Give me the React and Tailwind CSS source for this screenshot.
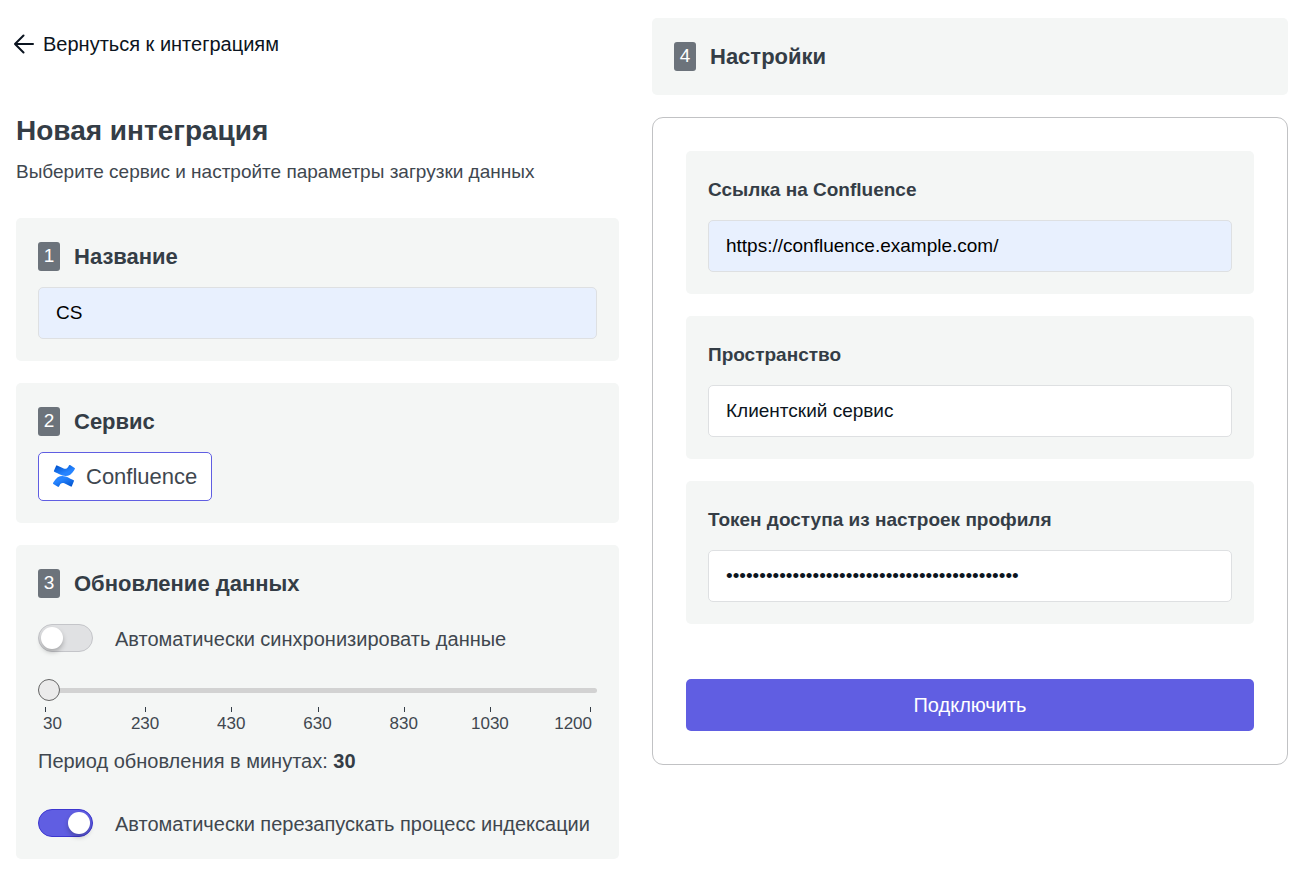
import { useState } from "react";

const periods = [30, 230, 430, 630, 830, 1030, 1200];

function Card({ children, className = "" }) {
  return <section className={`rounded-[5px] bg-[#f4f6f5] p-[22px] ${className}`}>{children}</section>;
}

function StepHeading({ step, children }) {
  return (
    <h2 className="flex h-[33px] items-center gap-[14px] text-[22px] leading-[32px] font-bold text-[#343d46]">
      <span className="flex h-[29px] w-[22px] justify-center rounded-[3px] bg-[#6c737b] text-[19px] leading-[27px] font-normal text-white">
        {step}
      </span>
      {children}
    </h2>
  );
}

function TextInput({ filled = false, ...props }) {
  return (
    <input
      {...props}
      className={`block h-[52px] w-full rounded-[5px] border border-[#dee0e2] px-[17px] text-[19px] ${
        filled ? "bg-[#e8f0fe] text-black" : "bg-white text-[#0b1420]"
      }`}
    />
  );
}

function SettingField({ id, label, ...props }) {
  return (
    <Card>
      <label htmlFor={id} className="mb-[14px] block text-[19px] leading-[33px] font-bold text-[#343d46]">
        {label}
      </label>
      <TextInput id={id} {...props} />
    </Card>
  );
}

function Switch({ label, checked, onChange }) {
  return (
    <label className="flex h-7 items-center gap-[22px] text-[20px] text-[#40474f]">
      <input
        type="checkbox"
        role="switch"
        checked={checked}
        onChange={(e) => onChange(e.target.checked)}
        className="h-7 w-[55px] shrink-0 appearance-none rounded-full border border-[#c4c5c9] bg-[#e0e1e3] px-[2px] py-[2px] before:block before:size-[22px] before:rounded-full before:bg-white before:shadow-[0_3px_5px_rgba(0,0,0,0.25)] checked:border-[#3d37cf] checked:bg-[#605ee2] checked:before:ml-[27px]"
      />
      <span className="pt-[2px]">{label}</span>
    </label>
  );
}

function ConfluenceLogo() {
  return (
    <svg viewBox="0 0 256 246" preserveAspectRatio="none" className="size-[22px]" aria-hidden="true">
      <defs>
        <linearGradient id="lower" x1="99%" y1="113%" x2="34%" y2="38%">
          <stop offset="18%" stopColor="#0052cc" />
          <stop offset="100%" stopColor="#2684ff" />
        </linearGradient>
        <linearGradient id="upper" x1="1%" y1="-13%" x2="66%" y2="62%">
          <stop offset="18%" stopColor="#0052cc" />
          <stop offset="100%" stopColor="#2684ff" />
        </linearGradient>
      </defs>
      <path
        fill="url(#lower)"
        d="M9.26 187.33c-2.64 4.3-5.61 9.3-8.13 13.29a8.13 8.13 0 0 0 2.72 11.05l52.83 32.51a8.13 8.13 0 0 0 11.25-2.77c2.12-3.53 4.84-8.12 7.81-13.04 20.93-34.54 41.98-30.31 79.93-12.19l52.38 24.91a8.13 8.13 0 0 0 10.94-4.06l25.15-56.9a8.13 8.13 0 0 0-4.06-10.65c-11.05-5.2-33.04-15.57-52.83-25.12-71.2-34.59-131.72-32.31-177.99 42.97z"
      />
      <path
        fill="url(#upper)"
        d="M246.12 58.23c2.64-4.3 5.6-9.3 8.12-13.29a8.13 8.13 0 0 0-2.72-11.05L198.7 1.38a8.13 8.13 0 0 0-11.46 2.69c-2.11 3.53-4.83 8.12-7.8 13.04-20.93 34.54-41.97 30.32-79.93 12.19L47.3 4.51a8.13 8.13 0 0 0-10.94 4.07L11.21 65.47a8.13 8.13 0 0 0 4.06 10.65c11.05 5.2 33.04 15.57 52.83 25.12 71.36 34.54 131.88 32.19 178.02-43.01z"
      />
    </svg>
  );
}

export default function App() {
  const [sync, setSync] = useState(false);
  const [restart, setRestart] = useState(true);
  const [period, setPeriod] = useState(30);

  return (
    <main className="grid grid-cols-2 pt-[18px] pr-3 pb-[14px] pl-4 font-['Liberation_Sans',sans-serif] text-[19px] text-[#40474f]">
      <div className="pr-[33px]">
        <a href="#integrations" className="-ml-[2px] flex h-[52px] items-center gap-[9px] text-[20px] text-[#0b1420]">
          <svg viewBox="0 0 20 20" className="size-5" fill="none" stroke="currentColor" strokeWidth="2" strokeLinecap="round" strokeLinejoin="round" aria-hidden="true">
            <path d="M19 10H1M9.500 1.500 1 10l8.500 8.500" />
          </svg>
          Вернуться к интеграциям
        </a>
        <h1 className="mt-[44px] text-[28px] leading-[33px] font-bold text-[#343d46]">Новая интеграция</h1>
        <p className="mt-[11px] mb-8 leading-[28px]">Выберите сервис и настройте параметры загрузки данных</p>

        <div className="flex flex-col gap-[22px]">
          <Card>
            <StepHeading step="1">Название</StepHeading>
            <div className="mt-[14px]">
              <TextInput filled aria-label="Название" defaultValue="CS" />
            </div>
          </Card>
          <Card>
            <StepHeading step="2">Сервис</StepHeading>
            <button type="button" className="mt-[14px] flex h-[49px] items-center gap-[11px] rounded-[5px] border border-[#605ee2] bg-white px-[14px] pb-px text-[22px]">
              <ConfluenceLogo />
              Confluence
            </button>
          </Card>
          <Card>
            <StepHeading step="3">Обновление данных</StepHeading>
            <div className="mt-6">
              <Switch label="Автоматически синхронизировать данные" checked={sync} onChange={setSync} />
            </div>
            <input
              type="range"
              min="30"
              max="1200"
              value={period}
              onChange={(e) => setPeriod(Number(e.target.value))}
              aria-label="Период обновления в минутах"
              className="mt-[27px] block h-[22px] w-full appearance-none bg-transparent [&::-webkit-slider-runnable-track]:h-[5px] [&::-webkit-slider-runnable-track]:rounded-full [&::-webkit-slider-runnable-track]:bg-[#d2d2d2] [&::-webkit-slider-thumb]:-mt-[9px] [&::-webkit-slider-thumb]:size-[22px] [&::-webkit-slider-thumb]:appearance-none [&::-webkit-slider-thumb]:rounded-full [&::-webkit-slider-thumb]:border [&::-webkit-slider-thumb]:border-[#666] [&::-webkit-slider-thumb]:bg-[#ebebeb]"
            />
            <ul className="mt-[6px] flex px-[5px] text-[17px] leading-[22px]">
              {periods.map((value, i) => (
                <li
                  key={value}
                  className={`flex flex-col gap-px ${
                    i === 0 ? "w-[59px] items-start" : i === 6 ? "w-[59px] items-end" : "flex-1 items-center"
                  }`}
                >
                  <span className="mr-px ml-[2px] h-[5px] w-px bg-[#343d46]" />
                  {value}
                </li>
              ))}
            </ul>
            <p className="mt-3 text-[20px] leading-[28px]">
              Период обновления в минутах: <b className="text-[#343d46]">{period}</b>
            </p>
            <div className="mt-[34px]">
              <Switch label="Автоматически перезапускать процесс индексации" checked={restart} onChange={setRestart} />
            </div>
          </Card>
        </div>
      </div>

      <form className="flex flex-col gap-[22px]" onSubmit={(e) => e.preventDefault()}>
        <Card>
          <StepHeading step="4">Настройки</StepHeading>
        </Card>
        <div className="flex flex-col gap-[22px] rounded-[11px] border border-[#c1c2c4] p-[33px]">
          <SettingField id="url" label="Ссылка на Confluence" filled defaultValue="https://confluence.example.com/" />
          <SettingField id="space" label="Пространство" defaultValue="Клиентский сервис" />
          <SettingField id="token" label="Токен доступа из настроек профиля" type="password" autoComplete="off" defaultValue={"0".repeat(44)} />
          <button type="submit" className="mt-[33px] h-[52px] rounded-[5px] bg-[#605ee2] text-[20px] text-white">
            Подключить
          </button>
        </div>
      </form>
    </main>
  );
}
